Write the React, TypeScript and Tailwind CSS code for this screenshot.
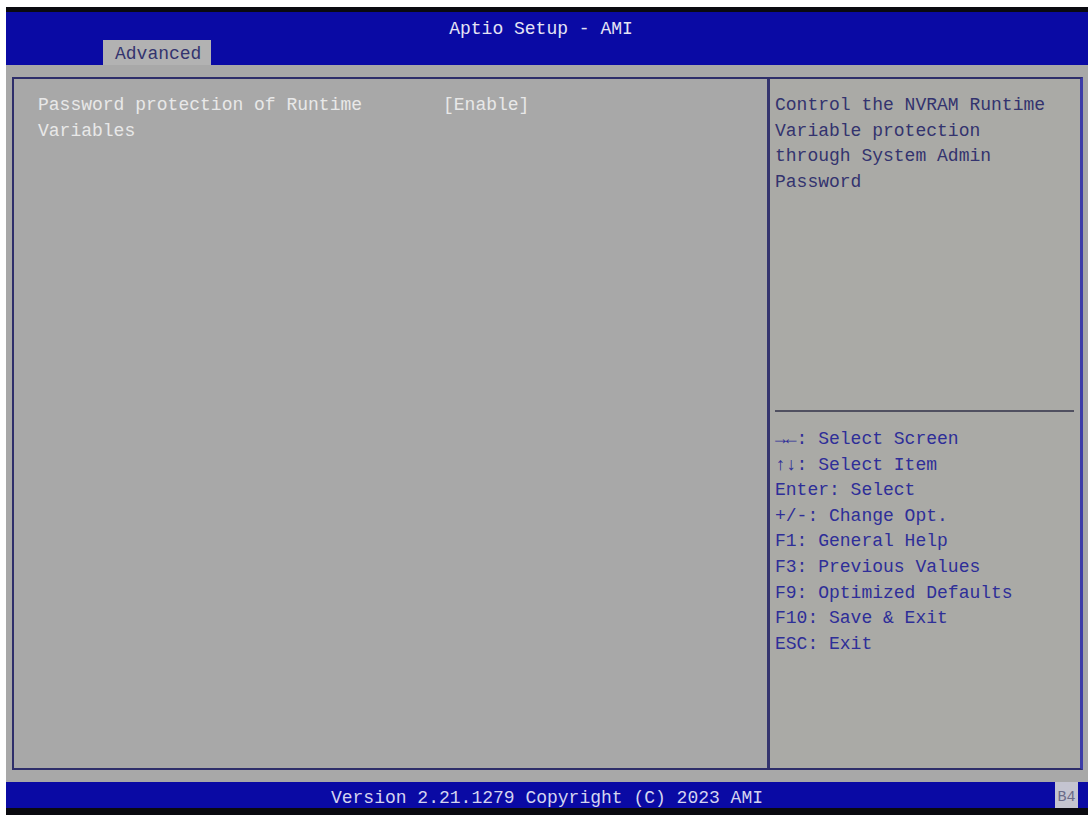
import React from "react";

const mono = "font-['Liberation_Mono','DejaVu_Sans_Mono',monospace]";

const helpKeys = [
  "→←: Select Screen",
  "↑↓: Select Item",
  "Enter: Select",
  "+/-: Change Opt.",
  "F1: General Help",
  "F3: Previous Values",
  "F9: Optimized Defaults",
  "F10: Save & Exit",
  "ESC: Exit",
];

export default function App() {
  return (
    <div className={`w-[1092px] h-[818px] bg-white pt-[7px] pl-[6px] ${mono}`}>
      <div className="w-[1082px] h-[808px] flex flex-col bg-[#a8a8a8]">
        {/* header */}
        <div className="h-[58px] border-t-[5px] border-[#0a0a10] bg-[#0a0aa4] flex flex-col pt-[7px]">
          <div className="h-[20px] leading-[20px] text-[18px] text-[#e4e4f4] text-center pr-[12px]">
            Aptio Setup - AMI
          </div>
          <div className="mt-[1px] ml-[97px] w-[108px] h-[25px] bg-[#b2b2b2] pl-[12px] pt-[2px] leading-[25px] text-[18px] text-[#34346e]">
            Advanced
          </div>
        </div>

        {/* main panel */}
        <div className="mt-[12px] ml-[6px] mr-[5px] h-[693px] flex border-2 border-[#2e2e6a] border-r-[3px] border-r-[#3c3ca8]">
          <div className="w-[753px] pt-[14px] pl-[24px] text-[18px] leading-[25.6px] text-[#e8e8e8]">
            <div className="flex">
              <div className="w-[405px]">Password protection of Runtime Variables</div>
              <div>[Enable]</div>
            </div>
          </div>
          <div className="w-[3px] bg-[#34346e]" />
          <div className="flex-1 flex flex-col bg-[#aaaaa6] text-[18px] leading-[25.6px]">
            <div className="h-[331px] pt-[14px] pl-[5px]">
              <div className="w-[285px] text-[#33336e]">
                Control the NVRAM Runtime Variable protection through System Admin Password
              </div>
            </div>
            <div className="h-[2px] ml-[5px] mr-[6px] bg-[#505060]" />
            <div className="pt-[15px] pl-[5px] text-[#2e2e98]">
              {helpKeys.map((k) => (
                <div key={k} className="whitespace-pre">
                  {k}
                </div>
              ))}
            </div>
          </div>
        </div>

        {/* footer */}
        <div className="mt-[12px] h-[26px] bg-[#0a0aa4] flex items-center relative">
          <div className="flex-1 text-center text-[18px] leading-[26px] pt-[5px] text-[#d4d4f0]">
            Version 2.21.1279 Copyright (C) 2023 AMI
          </div>
          <div className="absolute right-[10px] top-0 w-[23px] h-[26px] bg-[#c4c4d0] text-[15px] leading-[26px] pt-[3px] text-center text-[#6a6a88]">
            B4
          </div>
        </div>
        <div className="h-[7px] bg-[#0a0a10]" />
      </div>
    </div>
  );
}
